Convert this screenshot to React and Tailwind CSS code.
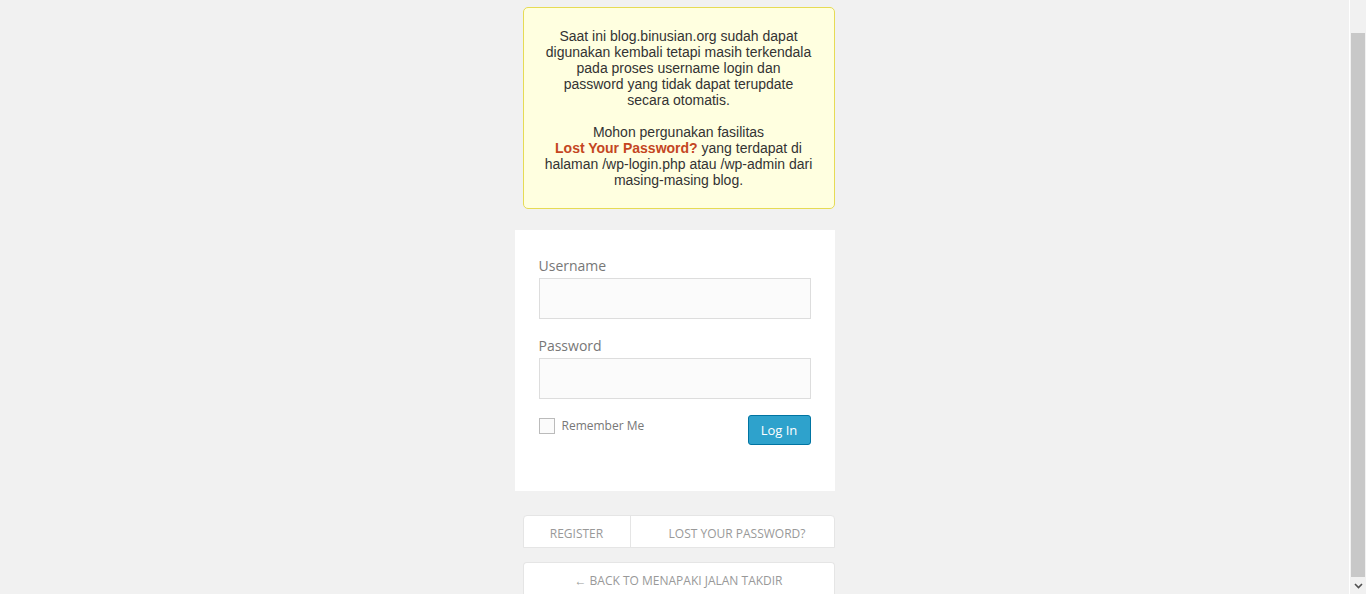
import React from "react";

export default function App() {
  const os = { fontFamily: '"Open Sans", "Noto Sans", sans-serif' };
  return (
    <div className="flex h-[594px] w-full overflow-hidden bg-[#f1f1f1]">
      <div className="flex-1 flex justify-center pt-[7px]">
        <div className="flex w-[320px] flex-col items-end">
          <div
            className="w-[312px] rounded-[5px] border border-[#e6db55] bg-[#ffffe0] px-5 py-5 text-center text-[14px] leading-[16px] text-[#333]"
            style={{ fontFamily: '"Liberation Sans", Arial, sans-serif' }}
          >
            Saat ini blog.binusian.org sudah dapat
            <br />
            digunakan kembali tetapi masih terkendala
            <br />
            pada proses username login dan
            <br />
            password yang tidak dapat terupdate
            <br />
            secara otomatis.
            <br />
            <br />
            Mohon pergunakan fasilitas
            <br />
            <span className="font-bold text-[#c4461f]">Lost Your Password?</span> yang terdapat di
            <br />
            halaman /wp-login.php atau /wp-admin dari
            <br />
            masing-masing blog.
          </div>

          <div className="mt-[21px] w-[320px] bg-white px-6 pt-[25px] pb-[46px]" style={os}>
            <div className="text-[14px] leading-[21px] text-[#777]">Username</div>
            <div className="mt-[2px] h-[41px] w-full border border-[#ddd] bg-[#fbfbfb]" />
            <div className="mt-4 text-[14px] leading-[21px] text-[#777]">Password</div>
            <div className="mt-[2px] h-[41px] w-full border border-[#ddd] bg-[#fbfbfb]" />
            <div className="mt-4 flex items-start justify-between">
              <div className="mt-[2px] flex items-center gap-[7px]">
                <div className="h-4 w-4 border border-[#bbb] bg-[#fbfbfb]" />
                <span className="text-[12px] text-[#777]">Remember Me</span>
              </div>
              <div className="flex h-[30px] w-[63px] items-center justify-center rounded-[3px] border border-[#0074a2] bg-[#2ea2cc] pt-[1px] text-[13px] text-white">
                Log In
              </div>
            </div>
          </div>

          <div
            className="mt-6 flex h-[33px] w-[312px] rounded-t-[4px] border border-[#e5e5e5] bg-white pt-[5px] text-[12px] uppercase text-[#999]"
            style={os}
          >
            <div className="-mt-[5px] flex w-[107px] items-center justify-center border-r border-[#e5e5e5] pt-[5px]">Register</div>
            <div className="flex flex-1 items-center justify-center pl-[10px]">Lost your password?</div>
          </div>

          <div
            className="mt-[14px] flex h-[33px] w-[312px] items-center justify-center rounded-t-[4px] border border-b-0 border-[#e5e5e5] bg-white pt-[6px] text-[12px] uppercase text-[#999]"
            style={os}
          >
            ← Back to Menapaki Jalan Takdir
          </div>
        </div>
      </div>

      <div className="flex w-[17px] flex-col border-l border-white bg-[#f1f1f1]">
        <div className="h-[33px]" />
        <div className="mx-[1px] flex-1 bg-[#c8c8c8]" />
        <div className="flex h-[17px] items-center justify-center">
          <svg width="9" height="6" viewBox="0 0 9 6">
            <path d="M1 1 L4.5 4.5 L8 1" stroke="#505050" strokeWidth="1.6" fill="none" />
          </svg>
        </div>
      </div>
    </div>
  );
}
